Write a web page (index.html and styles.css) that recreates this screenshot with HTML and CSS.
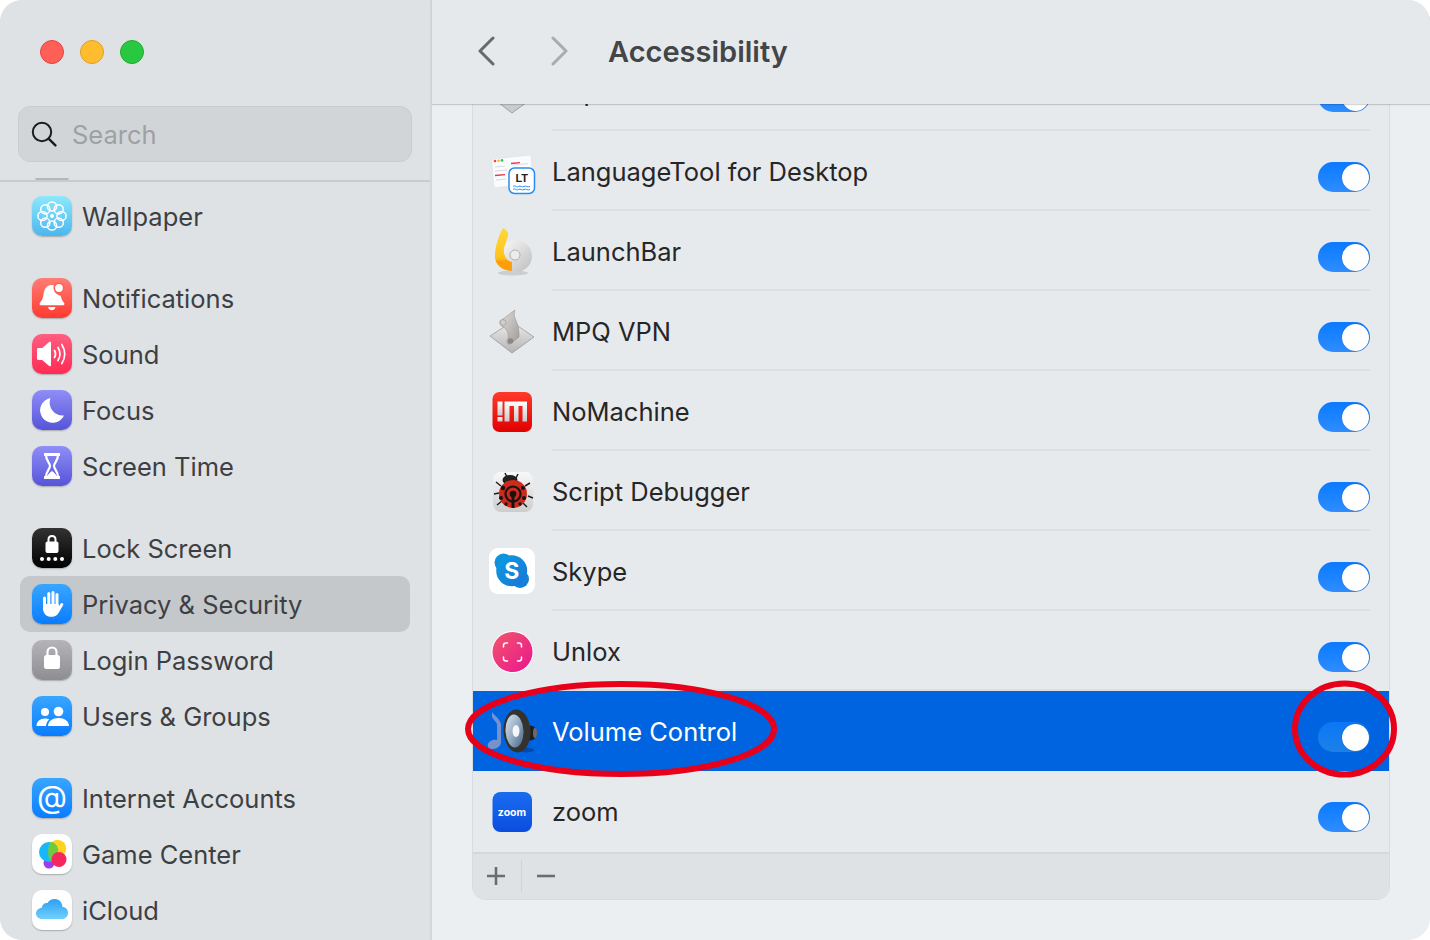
FILE: index.html
```html
<!DOCTYPE html>
<html lang="en">
<head>
<meta charset="utf-8">
<title>Accessibility</title>
<link rel="stylesheet" href="styles.css">
</head>
<body>
<div class="window">
  <aside class="sidebar">
    <div class="lights"><span class="light red"></span><span class="light yellow"></span><span class="light green"></span></div>
    <div class="search">
      <svg class="search-icon" width="26" height="26" viewBox="0 0 26 26"><circle cx="11" cy="11" r="9.2" fill="none" stroke="#1c1c1e" stroke-width="2"/><path d="M17.6 17.6 24.4 24.4" stroke="#1c1c1e" stroke-width="2.4" stroke-linecap="round"/></svg>
      <span class="search-text">Search</span>
    </div>
    <span class="peek"></span>
    <nav class="nav">
      <div class="group">
        <div class="nav-row"><span class="ico g-wall"><svg viewBox="0 0 40 40"><g fill="none" stroke="#fff" stroke-width="1.5"><circle cx="20" cy="10.5" r="4.6"/><circle cx="26.7" cy="13.3" r="4.6"/><circle cx="29.5" cy="20" r="4.6"/><circle cx="26.7" cy="26.7" r="4.6"/><circle cx="20" cy="29.5" r="4.6"/><circle cx="13.3" cy="26.7" r="4.6"/><circle cx="10.5" cy="20" r="4.6"/><circle cx="13.3" cy="13.3" r="4.6"/></g><circle cx="20" cy="20" r="2" fill="#fff"/></svg></span><span class="nav-label">Wallpaper</span></div>
      </div>
      <div class="group">
        <div class="nav-row"><span class="ico g-red"><svg viewBox="0 0 40 40"><path fill="#fff" d="M19.500 7C14.500 7 12.200 11 11.600 16c-.5 4-1.800 6.800-3.600 8.700-.9 1-.4 2.600 1 2.600h22c1.400 0 1.900-1.600 1-2.600-1.700-1.800-2.800-4-3.300-7C24 17 21 13 22 7.500 21.300 7.200 20.400 7 19.500 7Z"/><path fill="#fff" d="M16 29h7.500c-.3 2-1.800 3.200-3.700 3.200S16.300 31 16 29Z"/><circle cx="27" cy="10" r="4.700" fill="#fff" stroke="#ff5d54" stroke-width="1.600"/></svg></span><span class="nav-label">Notifications</span></div>
        <div class="nav-row"><span class="ico g-pink"><svg viewBox="0 0 40 40"><path fill="#fff" d="M5 15.500c0-.8.600-1.500 1.400-1.500h3.800l7-6c.9-.7 1.800-.2 1.800.9v22.200c0 1.100-.9 1.600-1.800.9l-7-6H6.400c-.8 0-1.400-.7-1.400-1.500Z"/><g fill="none" stroke="#fff" stroke-width="1.700" stroke-linecap="round"><path d="M22.500 16.500c1.300 2.200 1.300 4.800 0 7"/><path d="M26 13.500c2.500 4 2.500 9 0 13"/><path d="M29.800 10.500c3.700 6 3.700 13 0 19"/></g></svg></span><span class="nav-label">Sound</span></div>
        <div class="nav-row"><span class="ico g-indigo"><svg viewBox="0 0 40 40"><path fill="#fff" d="M18.500 8A12.500 12.500 0 1 0 32 25.500 13 13 0 0 1 18.500 8Z"/></svg></span><span class="nav-label">Focus</span></div>
        <div class="nav-row"><span class="ico g-indigo"><svg viewBox="0 0 40 40"><path fill="none" stroke="#fff" stroke-width="2.200" d="M14 9c0 6 4 8 4 11s-4 5-4 11h12c0-6-4-8-4-11s4-5 4-11Z"/><path fill="#fff" d="M15 31c.5-3 5-6 5-6s4.500 3 5 6ZM12 7h16v3H12ZM12 30h16v3H12Z"/></svg></span><span class="nav-label">Screen Time</span></div>
      </div>
      <div class="group">
        <div class="nav-row"><span class="ico g-black"><svg viewBox="0 0 40 40"><path fill="none" stroke="#fff" stroke-width="2" d="M16.500 14v-2.500c0-2 1.500-3.500 3.500-3.500s3.500 1.500 3.500 3.500V14"/><rect x="13.500" y="13.500" width="13" height="11.500" rx="2" fill="#fff"/><g fill="#fff"><circle cx="10" cy="31" r="2"/><circle cx="16.700" cy="31" r="2"/><circle cx="23.300" cy="31" r="2"/><circle cx="30" cy="31" r="2"/></g></svg></span><span class="nav-label">Lock Screen</span></div>
        <div class="nav-row selected"><span class="ico g-blue"><svg viewBox="0 0 40 40"><g stroke="#fff" stroke-width="3" stroke-linecap="round"><path d="M12.500 14v11"/><path d="M16.800 9.500V22"/><path d="M21 8.500V22"/><path d="M25 10.500V23"/><path d="M26.500 26l3.300-5.500"/></g><path fill="#fff" d="M11 20h15.500l1.500 6c-1.500 4-4 6.800-8.500 6.800-5.500 0-8.500-3.500-8.500-8.800Z"/></svg></span><span class="nav-label">Privacy &amp; Security</span></div>
        <div class="nav-row"><span class="ico g-gray"><svg viewBox="0 0 40 40"><path fill="none" stroke="#fff" stroke-width="2.200" d="M15.500 16v-4c0-2.600 1.900-4.500 4.500-4.500s4.500 1.900 4.500 4.500v4"/><rect x="12" y="15" width="16" height="14" rx="2.500" fill="#fff"/></svg></span><span class="nav-label">Login Password</span></div>
        <div class="nav-row"><span class="ico g-blue"><svg viewBox="0 0 40 40"><g fill="#fff"><circle cx="13" cy="16" r="4"/><circle cx="26.500" cy="15.500" r="4.800"/><path d="M4.500 30c0-4.500 3.500-7.500 8.500-7.500 1.800 0 3 .3 4.300 1-2 1.500-3 3.700-3.300 6.500Z"/><path d="M16 30c.2-4.800 4.500-8 10.500-8S36.800 25.200 37 30Z"/></g></svg></span><span class="nav-label">Users &amp; Groups</span></div>
      </div>
      <div class="group">
        <div class="nav-row"><span class="ico g-blue"><svg viewBox="0 0 40 40"><text class="at" x="20" y="30" text-anchor="middle">@</text></svg></span><span class="nav-label">Internet Accounts</span></div>
        <div class="nav-row"><span class="ico g-white"><svg viewBox="0 0 40 40"><circle cx="17" cy="29" r="5.500" fill="#a03ce8"/><circle cx="17" cy="18" r="10" fill="#18b8f8"/><circle cx="25.500" cy="14.500" r="8.700" fill="#ffd21f"/><path fill="#6ccb3f" d="M19 7.700a8.700 8.700 0 0 1 7 10.500 10 10 0 0 1-6.800 8.500c-2-.1-3-4-3-9 0-4.500 1.200-8.700 2.800-10Z"/><circle cx="27" cy="25.500" r="7.500" fill="#f5275d"/></svg></span><span class="nav-label">Game Center</span></div>
        <div class="nav-row"><span class="ico g-white"><svg viewBox="0 0 40 40"><defs><linearGradient id="cloud" x1="0" y1="0" x2="0" y2="1"><stop offset="0" stop-color="#2f9ff5"/><stop offset="1" stop-color="#70d0fb"/></linearGradient></defs><path fill="url(#cloud)" d="M10 29c-3.500 0-6-2.500-6-5.500S6.500 18 9.500 18c1-4 3.500-5.500 6-5 1.500-2.500 4-4 7-4 4.500 0 8 3.500 8 8 3.200 0 5.500 2.500 5.500 6s-2.500 6-6 6Z"/></svg></span><span class="nav-label">iCloud</span></div>
      </div>
    </nav>
  </aside>
  <main class="main">
    <header class="toolbar">
      <svg class="chev" width="18" height="30" viewBox="0 0 18 30"><path d="M16 2 3 15l13 13" fill="none" stroke="#67696b" stroke-width="3" stroke-linecap="round" stroke-linejoin="round"/></svg>
      <svg class="chev fwd" width="18" height="30" viewBox="0 0 18 30"><path d="M2 2l13 13L2 28" fill="none" stroke="#a9acae" stroke-width="3" stroke-linecap="round" stroke-linejoin="round"/></svg>
      <h1 class="title">Accessibility</h1>
    </header>
    <section class="content">
      <div class="panel">
        <div class="rows">
          <div class="row"><span class="app-ico"><svg viewBox="0 0 48 48"><path fill="#c9cbcd" stroke="#8f9194" stroke-width=".8" d="M2 28 24 14l22 15-22 16Z"/><path fill="#a9a5a3" d="M12 16c-1-3 1-4 3-5L27 2c-2 5 0 8 2 13 2 5 2 10 2 14l-9 7c-3 1-4-3-2-5 1-4 0-8-3-11-2-1-4-2-5-4Z"/></svg></span><div class="row-body"><span class="row-label">Kopia</span><span class="toggle"></span></div></div>
          <div class="row"><span class="app-ico"><svg viewBox="0 0 48 48"><path fill="#fafbfc" stroke="#dcdfe4" stroke-width=".6" d="M3.500 11 43 7l2 28L6 40Z"/><circle cx="7" cy="13" r="1.300" fill="#f2453d"/><circle cx="10.500" cy="12.700" r="1.300" fill="#f5b52e"/><circle cx="14" cy="12.400" r="1.300" fill="#3bbf4a"/><g stroke="#d7dbe2" stroke-width="1"><path d="M7 19l10-.9M7 23l12-1M25 17l15-1.300M22 22l10-.9M8 32l10-.9"/></g><g stroke="#e8344a" stroke-width="1.300"><path d="M23 15.500l9-.8M7 27.500l10-.9"/></g><rect x="21" y="20" width="25.500" height="25.500" rx="5.500" fill="#fff" stroke="#2a8cf2" stroke-width="1.500"/><text class="lt" x="33.700" y="33.500" text-anchor="middle">LT</text><path d="M25 38.500c2-2 3.500 1.500 5.500 0s3.500 1.500 5.500 0 3.500 1.500 6 0M25 41.500c2-2 3.500 1.500 5.500 0s3.500 1.500 5.500 0 3.500 1.500 6 0" fill="none" stroke="#2a8cf2" stroke-width="1"/></svg></span><div class="row-body"><span class="row-label">LanguageTool for Desktop</span><span class="toggle"></span></div></div>
          <div class="row"><span class="app-ico"><svg viewBox="0 0 48 48"><defs><linearGradient id="lbY" x1="0" y1="0" x2="0" y2="1"><stop offset="0" stop-color="#ffd83a"/><stop offset=".7" stop-color="#ffc21a"/><stop offset=".78" stop-color="#ff9d0a"/><stop offset="1" stop-color="#ff9d0a"/></linearGradient><linearGradient id="lbD" x1="0" y1="0" x2="1" y2="1"><stop offset="0" stop-color="#fbfbfb"/><stop offset="1" stop-color="#bdbdbd"/></linearGradient></defs><ellipse cx="25" cy="45" rx="15" ry="2.500" fill="#000" opacity=".12"/><circle cx="28" cy="28" r="16" fill="url(#lbD)"/><circle cx="27" cy="27" r="5" fill="#ececec" stroke="#b0b0b0" stroke-width="1"/><path fill="url(#lbY)" d="M15 0C18 1 21 5 20 8L16 20C15 26 18 33 24 34V43C14 43 6 36 7 27 7 20 11 6 15 0Z"/></svg></span><div class="row-body"><span class="row-label">LaunchBar</span><span class="toggle"></span></div></div>
          <div class="row"><span class="app-ico"><svg viewBox="0 0 48 48"><defs><linearGradient id="mpqA" x1="0" y1="0" x2="0" y2="1"><stop offset="0" stop-color="#ececec"/><stop offset="1" stop-color="#b4b4b4"/></linearGradient><linearGradient id="mpqB" x1="0" y1="0" x2="1" y2="1"><stop offset="0" stop-color="#e2dfdd"/><stop offset="1" stop-color="#a09c9a"/></linearGradient></defs><path fill="url(#mpqA)" stroke="#8e9093" stroke-width=".7" d="M2 28 24 14l22 15-22 16Z"/><path fill="url(#mpqB)" stroke="#8a8684" stroke-width=".5" d="M12 16c-1-3 1-4 3-5L27 2c-2 5 0 8 2 13 2 5 2 10 2 14l-9 7c-3 1-4-3-2-5 1-4 0-8-3-11-2-1-4-2-5-4Z"/><circle cx="15" cy="14.500" r="3" fill="#cfccca" stroke="#8a8684" stroke-width=".5"/><circle cx="22.500" cy="33" r="2.800" fill="#8a8684"/></svg></span><div class="row-body"><span class="row-label">MPQ VPN</span><span class="toggle"></span></div></div>
          <div class="row"><span class="app-ico"><svg viewBox="0 0 48 48"><defs><linearGradient id="nmR" x1="0" y1="0" x2="0" y2="1"><stop offset="0" stop-color="#ff3a2a"/><stop offset="1" stop-color="#e00000"/></linearGradient><linearGradient id="nmW" x1="0" y1="0" x2="0" y2="1"><stop offset="0" stop-color="#fff"/><stop offset="1" stop-color="#c9c9c9"/></linearGradient></defs><rect x="4.500" y="4" width="39.500" height="40" rx="7" fill="url(#nmR)"/><g fill="url(#nmW)"><rect x="9.500" y="13.500" width="5" height="14"/><rect x="9.500" y="29" width="5" height="4.500"/><path d="M16.500 13.500H39v20h-4.500V18h-4v15.500H26V18h-4.500v15.500h-5Z"/></g></svg></span><div class="row-body"><span class="row-label">NoMachine</span><span class="toggle"></span></div></div>
          <div class="row"><span class="app-ico"><svg viewBox="0 0 48 48"><defs><linearGradient id="sdB" x1="0" y1="0" x2="0" y2="1"><stop offset="0" stop-color="#f8f8f8"/><stop offset="1" stop-color="#cdcdcd"/></linearGradient></defs><rect x="5" y="4" width="40" height="40" rx="8" fill="url(#sdB)"/><g stroke="#1e1e1e" stroke-width="1.500"><path d="M13 18 8 14M11 25 6 26M14 33 9 37M37 18l5-3M40 28l5 2M35 35l4 4M19 9l-2-4M28 10l2-4"/></g><ellipse cx="22" cy="12" rx="7.500" ry="5" fill="#231f1f"/><circle cx="25" cy="26" r="14" fill="#cc2a1c"/><g fill="#1a1210"><circle cx="15" cy="20" r="2.200"/><circle cx="35" cy="20" r="2"/><circle cx="13" cy="30" r="2"/><circle cx="36" cy="30" r="2"/><circle cx="18" cy="36" r="1.700"/><circle cx="32" cy="36" r="1.700"/></g><circle cx="25" cy="26" r="7.500" fill="none" stroke="#1a1210" stroke-width="2.200"/><circle cx="25" cy="26" r="3.300" fill="#1a1210"/><path d="M25 26v14" stroke="#1a1210" stroke-width="3"/></svg></span><div class="row-body"><span class="row-label">Script Debugger</span><span class="toggle"></span></div></div>
          <div class="row"><span class="app-ico"><svg viewBox="0 0 48 48"><defs><linearGradient id="skB" x1="0" y1="0" x2="1" y2="1"><stop offset="0" stop-color="#0a9de0"/><stop offset="1" stop-color="#1b74d8"/></linearGradient></defs><rect x="1" y="0" width="46" height="46" rx="9" fill="#fff"/><g fill="url(#skB)"><circle cx="15.500" cy="14.500" r="9"/><circle cx="32" cy="31" r="9"/><circle cx="23.700" cy="22.700" r="15.500"/></g><text class="sk" x="23.700" y="31" text-anchor="middle">S</text></svg></span><div class="row-body"><span class="row-label">Skype</span><span class="toggle"></span></div></div>
          <div class="row"><span class="app-ico"><svg viewBox="0 0 48 48"><defs><linearGradient id="unB" x1="0" y1="0" x2="1" y2="1"><stop offset="0" stop-color="#f0566a"/><stop offset="1" stop-color="#ec1490"/></linearGradient></defs><circle cx="24.500" cy="24" r="21" fill="#fff"/><circle cx="24.500" cy="24" r="20" fill="url(#unB)"/><path fill="none" stroke="#fff" stroke-width="1.500" stroke-linecap="round" d="M15.500 19v-1.500c0-1.500 1-2.500 2.500-2.500h1.500M29.500 15H31c1.500 0 2.500 1 2.500 2.500V19M33.500 29v1.500c0 1.500-1 2.500-2.500 2.500h-1.500M19.500 33H18c-1.500 0-2.500-1-2.500-2.500V29"/></svg></span><div class="row-body"><span class="row-label">Unlox</span><span class="toggle"></span></div></div>
          <div class="row active"><span class="app-ico"><svg viewBox="0 0 48 48"><defs><linearGradient id="vcC" x1="0" y1="0" x2="1" y2="1"><stop offset="0" stop-color="#dfe7ee"/><stop offset=".55" stop-color="#8ea6bd"/><stop offset="1" stop-color="#3f5f80"/></linearGradient></defs><path fill="#7592cc" d="M4 4c2 3 8 7 9 12v18c0 4-4 7-8 7s-6-2-5-5 5-5 9-4V16c-1-2-4-5-5-7Z"/><ellipse cx="38" cy="42" rx="8" ry="2.500" fill="#003f9e" opacity=".7"/><ellipse cx="42" cy="25" rx="7" ry="7.500" fill="#1f1f1f"/><ellipse cx="47" cy="25" rx="2" ry="5" fill="#6b6b6b"/><ellipse cx="29" cy="23" rx="13.500" ry="21.500" fill="#33322f" transform="rotate(-3 29 23)"/><ellipse cx="26.500" cy="23" rx="9" ry="16.500" fill="url(#vcC)" transform="rotate(-3 26.500 23)"/><ellipse cx="28" cy="23" rx="3.500" ry="6" fill="#fff" opacity=".9"/></svg></span><div class="row-body"><span class="row-label">Volume Control</span><span class="toggle"></span></div></div>
          <div class="row last"><span class="app-ico"><svg viewBox="0 0 48 48"><defs><linearGradient id="zmB" x1="0" y1="0" x2="0" y2="1"><stop offset="0" stop-color="#1b6cef"/><stop offset="1" stop-color="#0a4de0"/></linearGradient></defs><rect x="4.500" y="4" width="39.500" height="40" rx="8" fill="url(#zmB)"/><text class="zm" x="24" y="27.500" text-anchor="middle">zoom</text></svg></span><div class="row-body"><span class="row-label">zoom</span><span class="toggle"></span></div></div>
        </div>
        <div class="panel-foot">
          <span class="foot-btn"><svg width="18" height="18" viewBox="0 0 18 18"><path d="M9 0v18M0 9h18" stroke="#6a6d70" stroke-width="2.600"/></svg></span>
          <span class="foot-sep"></span>
          <span class="foot-btn"><svg width="18" height="18" viewBox="0 0 18 18"><path d="M0 9h18" stroke="#6a6d70" stroke-width="2.600"/></svg></span>
        </div>
      </div>
    </section>
  </main>
  <svg class="marks" width="1430" height="940" viewBox="0 0 1430 940"><ellipse cx="621" cy="729" rx="153" ry="45" fill="none" stroke="#e8001a" stroke-width="6"/><ellipse cx="1344.500" cy="729" rx="49.500" ry="45.500" fill="none" stroke="#e8001a" stroke-width="6"/></svg>
</div>
</body>
</html>
```
FILE: styles.css
```css
* { box-sizing: border-box; }
html, body { margin: 0; padding: 0; background: #fff; }
body { font-family: Inter, "Liberation Sans", sans-serif; }
.window { position: relative; display: flex; width: 1430px; height: 940px; border-radius: 22px; overflow: hidden; background: #ebeff2; }
.sidebar { display: flex; flex-direction: column; width: 432px; flex: none; height: 940px; background: #dfe2e5; border-right: 2px solid #d3d7da; }
.lights { display: flex; gap: 16px; padding: 40px 0 0 40px; height: 106px; }
.light { width: 24px; height: 24px; border-radius: 50%; border: 1px solid; }
.red { background: #ff5f57; border-color: #e2463f; }
.yellow { background: #febc2e; border-color: #dfa023; }
.green { background: #28c840; border-color: #1dad2b; }
.search { display: flex; align-items: center; height: 56px; margin: 0 18px; padding-left: 12px; background: #d2d5d7; border: 1px solid #cacdd0; border-radius: 12px; }
.search-icon { flex: none; }
.search-text { margin-left: 15px; font-size: 25.500px; color: #9ea1a3; }
.peek { display: block; flex: none; width: 34px; height: 2px; margin: 16px 0 0 35px; background: #b4b7ba; border-radius: 0 0 10px 10px; }
.nav { flex: 1; border-top: 2px solid #c8cbce; padding: 6px 20px 0; overflow: hidden; display: flex; flex-direction: column; gap: 26px; }
.nav-row { display: flex; align-items: center; height: 56px; padding-left: 12px; border-radius: 10px; }
.selected { background: #c5c8cb; }
.ico { flex: none; width: 40px; height: 40px; border-radius: 10px; box-shadow: 0 1px 1.500px rgba(0,0,0,.25); overflow: hidden; }
.ico svg { display: block; width: 40px; height: 40px; }
.nav-label { margin-left: 10px; font-size: 25.500px; color: #3d4043; white-space: nowrap; }
.g-wall { background: linear-gradient(#8ce8fb, #4cb6ee); }
.g-red { background: linear-gradient(#ff7d75, #ff3a30); }
.g-pink { background: linear-gradient(#ff5e80, #ff2b55); }
.g-indigo { background: linear-gradient(#8f8ef7, #5654d8); }
.g-black { background: linear-gradient(#333, #000); }
.g-blue { background: linear-gradient(#38a6ff, #0a7dff); }
.g-gray { background: linear-gradient(#b5b5b9, #8d8d92); }
.g-white { background: #fff; }
.at { font-family: Inter, sans-serif; font-size: 31px; fill: #fff; }
.main { flex: 1; min-width: 0; display: flex; flex-direction: column; }
.toolbar { position: relative; z-index: 1; flex: none; display: flex; align-items: center; height: 104px; padding-left: 45px; background: #e6e9ec; box-shadow: 0 1px 1px rgba(0,0,0,.16); }
.chev { flex: none; margin-top: -3px; }
.fwd { margin-left: 56px; }
.title { margin: -2px 0 0 39px; font-size: 29px; font-weight: 600; color: #434547; }
.content { flex: 1; min-height: 0; overflow: hidden; padding: 0 40px; }
.panel { margin-top: -53px; height: 848.500px; display: flex; flex-direction: column; background: #e7eaed; border: 1px solid #d9dcdf; border-top: 0; border-radius: 0 0 14px 14px; overflow: hidden; }
.rows { flex: none; }
.row { display: flex; height: 80px; padding-left: 15px; }
.app-ico { flex: none; width: 48px; height: 48px; margin-top: 17px; }
.app-ico svg { display: block; width: 48px; height: 48px; overflow: visible; }
.row-body { flex: 1; display: flex; align-items: center; justify-content: space-between; margin: 0 19px 0 16px; border-bottom: 2px solid #dde0e3; }
.row-label { font-size: 25.500px; color: #262626; margin-top: 2px; white-space: nowrap; }
.toggle { position: relative; width: 52px; height: 30px; margin-top: 14px; border-radius: 15px; background: linear-gradient(#0a7aff, #2f8dff); }
.toggle::after { content: ""; position: absolute; top: 1.500px; right: 1.300px; width: 27px; height: 27px; border-radius: 50%; background: #fff; box-shadow: 0 0 1px rgba(0,0,0,.4); }
.active { background: #0064e1; }
.active .row-label { color: #fff; }
.active .row-body, .last .row-body { border-bottom-color: transparent; }
.active .toggle { background: linear-gradient(#0a78f6, #1c80e8); }
.panel-foot { flex: 1; display: flex; align-items: center; margin-top: 1px; padding-left: 14px; background: #dfe2e5; border-top: 2px solid #d5d8db; }
.foot-btn { display: flex; }
.foot-sep { width: 1px; height: 32px; margin: 0 15px 0 16px; background: #cfd2d5; }
.lt { font-family: "Liberation Sans", sans-serif; font-size: 11px; font-weight: 700; fill: #222; }
.sk { font-family: Inter, sans-serif; font-size: 23px; font-weight: 700; fill: #fff; }
.zm { font-family: Inter, sans-serif; font-size: 10.500px; font-weight: 700; fill: #fff; }
.marks { position: absolute; left: 0; top: 0; pointer-events: none; z-index: 2; }
```
